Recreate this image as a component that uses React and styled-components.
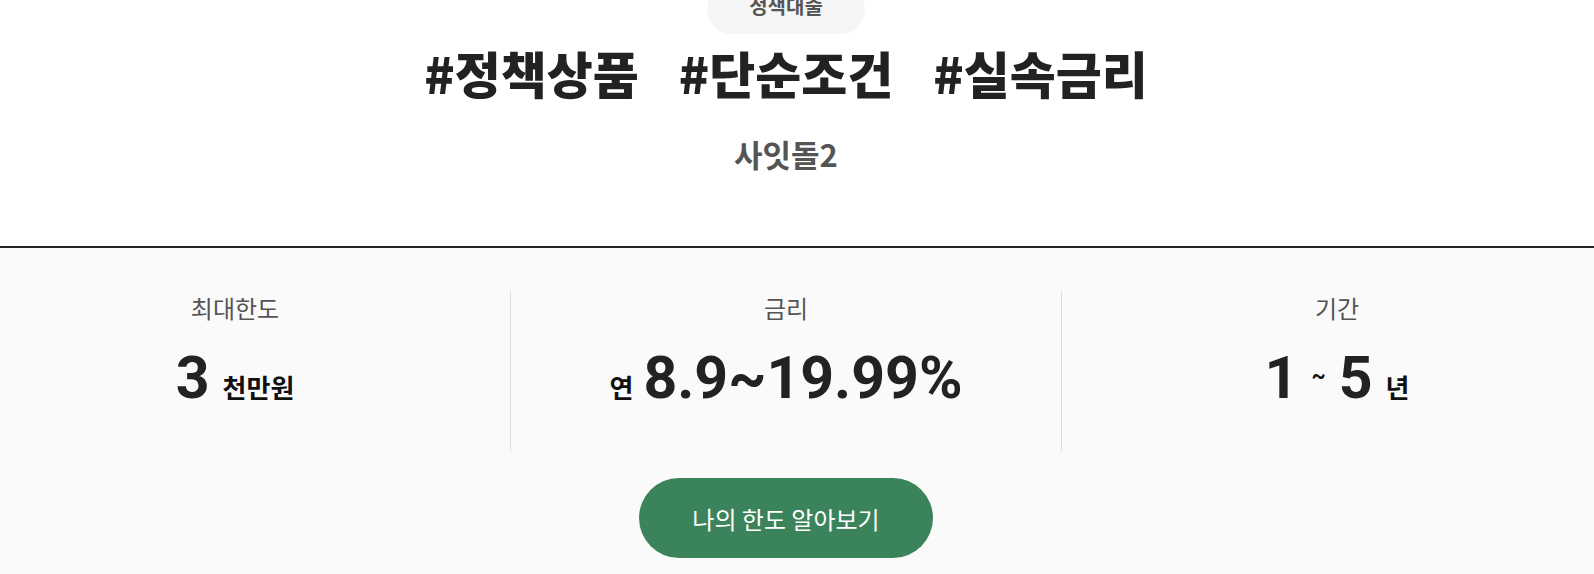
import styled, { createGlobalStyle } from "styled-components";

const GlobalStyle = createGlobalStyle`
  body {
    margin: 0;
    background: #fff;
    overflow: hidden;
    font-family: "Noto Sans CJK KR", "Noto Sans", sans-serif;
  }
`;

const Page = styled.div`
  width: 100%;
`;

const Head = styled.div`
  display: flex;
  flex-direction: column;
  align-items: center;
  padding-right: 22px;
  padding-bottom: 73px;
`;

const Badge = styled.div`
  margin-top: -16px;
  width: 158px;
  height: 50px;
  box-sizing: border-box;
  padding-bottom: 8px;
  border-radius: 25px;
  background: #f5f5f5;
  display: flex;
  align-items: center;
  justify-content: center;
  font-size: 20px;
  font-weight: 700;
  color: #555;
`;

const Tags = styled.h1`
  margin: 6px 0 0;
  font-size: 50px;
  line-height: 64px;
  font-weight: 900;
  color: #222;
  display: flex;
  gap: 40px;
`;

const Sub = styled.h2`
  margin: 31px 0 0;
  font-size: 31px;
  line-height: 38px;
  font-weight: 700;
  color: #555;
`;

const Info = styled.section`
  border-top: 2px solid #222;
  background: #fafafa;
  padding: 43px 22px 30px 0;
  display: flex;
  flex-direction: column;
  align-items: center;
`;

const Stats = styled.div`
  display: flex;
  justify-content: center;
  width: 100%;
`;

const Stat = styled.div`
  flex: 0 0 550px;
  height: 160px;
  display: flex;
  flex-direction: column;
  align-items: center;
  border-left: ${(p) => (p.first ? "none" : "1px solid #ddd")};
`;

const Label = styled.div`
  font-size: 24px;
  line-height: 33px;
  color: #555;
`;

const Value = styled.div`
  margin-top: 19px;
  display: flex;
  align-items: baseline;
  gap: ${(p) => p.gap || 13}px;
  color: #222;
`;

const Num = styled.span`
  font-family: Roboto, "Liberation Sans", sans-serif;
  font-size: 59px;
  line-height: 70px;
  font-weight: 700;
`;

const Unit = styled.span`
  font-size: 26px;
  font-weight: 700;
  color: #111;
`;

const Tilde = styled.span`
  font-family: Roboto, sans-serif;
  font-size: 22px;
  font-weight: 700;
  color: #111;
  align-self: center;
  margin-top: -6px;
`;

const Button = styled.button`
  margin-top: 27px;
  width: 294px;
  height: 80px;
  border: none;
  border-radius: 40px;
  background: #3b835b;
  color: #fff;
  font-family: "Noto Sans CJK KR", sans-serif;
  font-size: 24px;
  font-weight: 400;
  cursor: pointer;
`;

export default function App() {
  return (
    <Page>
      <GlobalStyle />
      <Head>
        <Badge>정책대출</Badge>
        <Tags>
          <span>#정책상품</span>
          <span>#단순조건</span>
          <span>#실속금리</span>
        </Tags>
        <Sub>사잇돌2</Sub>
      </Head>
      <Info>
        <Stats>
          <Stat first>
            <Label>최대한도</Label>
            <Value>
              <Num>3</Num>
              <Unit>천만원</Unit>
            </Value>
          </Stat>
          <Stat>
            <Label>금리</Label>
            <Value gap={10}>
              <Unit>연</Unit>
              <Num>8.9~19.99%</Num>
            </Value>
          </Stat>
          <Stat>
            <Label>기간</Label>
            <Value>
              <Num>1</Num>
              <Tilde>~</Tilde>
              <Num>5</Num>
              <Unit>년</Unit>
            </Value>
          </Stat>
        </Stats>
        <Button>나의 한도 알아보기</Button>
      </Info>
    </Page>
  );
}
